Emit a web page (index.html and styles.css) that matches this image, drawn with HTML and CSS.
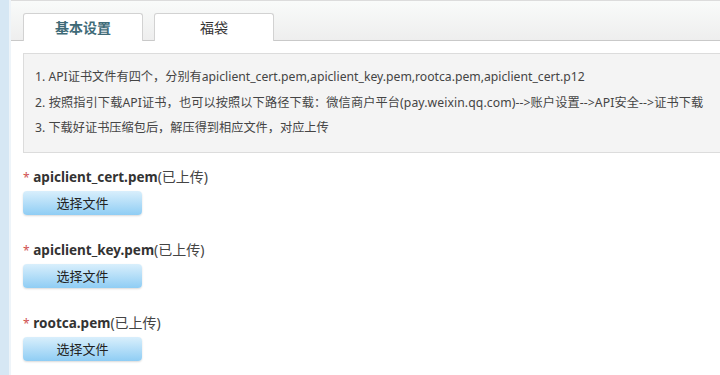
FILE: index.html
```html
<!DOCTYPE html>
<html lang="zh-CN">
<head>
    <meta charset="UTF-8">
    <title>证书设置</title>
    <link rel="stylesheet" href="styles.css">
</head>
<body>
    <div class="page">
        <div class="side-strip"></div>
        <div class="main">
            <!-- Tabs -->
            <div class="tab-bar">
                <div class="tab active">基本设置</div>
                <div class="tab">福袋</div>
            </div>

            <!-- Notice box -->
            <div class="notice">
                <p>1. API证书文件有四个，分别有apiclient_cert.pem,apiclient_key.pem,rootca.pem,apiclient_cert.p12</p>
                <p>2. 按照指引下载API证书，也可以按照以下路径下载：微信商户平台(pay.weixin.qq.com)--&gt;账户设置--&gt;API安全--&gt;证书下载</p>
                <p>3. 下载好证书压缩包后，解压得到相应文件，对应上传</p>
            </div>

            <!-- Upload fields -->
            <div class="field">
                <div class="field-label"><span class="star">*</span> <b>apiclient_cert.pem</b>(已上传)</div>
                <button class="file-button">选择文件</button>
            </div>
            <div class="field">
                <div class="field-label"><span class="star">*</span> <b>apiclient_key.pem</b>(已上传)</div>
                <button class="file-button">选择文件</button>
            </div>
            <div class="field">
                <div class="field-label"><span class="star">*</span> <b>rootca.pem</b>(已上传)</div>
                <button class="file-button">选择文件</button>
            </div>
        </div>
    </div>
</body>
</html>
```

FILE: styles.css
```css
/* General */
body {
    margin: 0;
    padding: 0;
    font-family: "Noto Sans", "Noto Sans CJK SC", sans-serif;
    color: #333;
    background-color: #fff;
}

.page {
    display: flex;
    height: 375px;
    overflow: hidden;
}

.side-strip {
    width: 9px;
    flex-shrink: 0;
    background-color: #d6e7f4;
    border-right: 2px solid #eef4f9;
}

.main {
    flex: 1;
    border-top: 1px solid #dcdcdc;
}

/* Tabs */
.tab-bar {
    display: flex;
    align-items: flex-end;
    gap: 11px;
    height: 39px;
    padding-left: 12px;
    background: linear-gradient(#f9fbfa, #eeeeee);
    border-bottom: 1px solid #c9c9c9;
}

.tab {
    width: 118px;
    height: 27px;
    line-height: 27px;
    margin-bottom: -1px;
    text-align: center;
    font-size: 14px;
    color: #333;
    background-color: #fff;
    border: 1px solid #d2d2d2;
    border-bottom: none;
    border-radius: 3px 3px 0 0;
    box-sizing: content-box;
}

.tab.active {
    color: #3f6b78;
    font-weight: bold;
}

/* Notice */
.notice {
    margin: 12px 0 0 12px;
    padding: 10px 0 11px 11px;
    background-color: #f4f4f4;
    border: 1px solid #dcdcdc;
    border-right: none;
    font-size: 12.2px;
    color: #444;
}

.notice p {
    margin: 0;
    line-height: 25.5px;
    white-space: nowrap;
}

.notice p:nth-child(2) {
    letter-spacing: 0.1px;
}

/* Upload fields */
.field {
    margin-left: 12px;
    margin-top: 14px;
}

.field + .field {
    margin-top: 25px;
}

.field-label {
    font-size: 14px;
    line-height: 20px;
    color: #444;
}

.field-label b {
    font-size: 13.5px;
    color: #333;
}

.star {
    color: #d05050;
    font-size: 12px;
}

.file-button {
    display: block;
    width: 119px;
    height: 24px;
    margin-top: 3px;
    padding: 0;
    font-family: "Noto Sans CJK SC", sans-serif;
    font-size: 13px;
    color: #222;
    background: linear-gradient(#d9effc, #8fcdf4);
    border: none;
    border-radius: 4px;
    box-shadow: 0 1px 2px rgba(0, 0, 0, 0.15);
    cursor: pointer;
}
```
